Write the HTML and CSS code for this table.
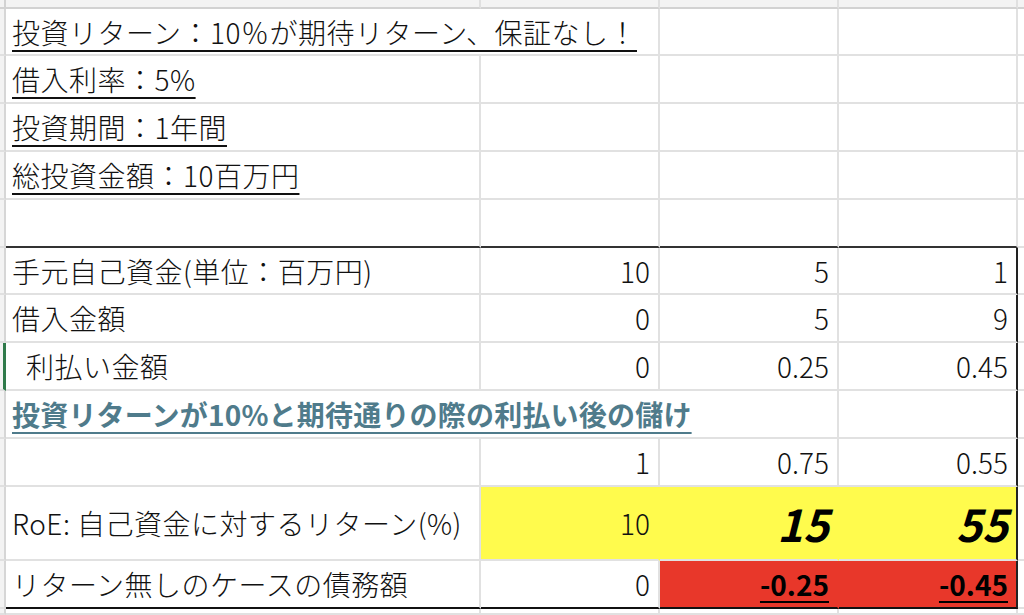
FILE: index.html
```html
<!DOCTYPE html>
<html lang="ja">
<head>
<meta charset="utf-8">
<title>投資リターン</title>
<link rel="stylesheet" href="styles.css">
</head>
<body>
<div class="sheet">
  <!-- column header strip -->
  <div class="ch corner"></div>
  <div class="ch"></div>
  <div class="ch"></div>
  <div class="ch"></div>
  <div class="ch"></div>
  <div class="ch rest"></div>

  <!-- row 1 -->
  <div class="rh"></div>
  <div class="c label span2"><span class="u">投資リターン：10％が期待リターン、保証なし！</span></div>
  <div class="c"></div>
  <div class="c"></div>
  <div class="c rest"></div>

  <!-- row 2 -->
  <div class="rh"></div>
  <div class="c label"><span class="u">借入利率：5%</span></div>
  <div class="c"></div>
  <div class="c"></div>
  <div class="c"></div>
  <div class="c rest"></div>

  <!-- row 3 -->
  <div class="rh"></div>
  <div class="c label"><span class="u">投資期間：1年間</span></div>
  <div class="c"></div>
  <div class="c"></div>
  <div class="c"></div>
  <div class="c rest"></div>

  <!-- row 4 -->
  <div class="rh"></div>
  <div class="c label"><span class="u">総投資金額：10百万円</span></div>
  <div class="c"></div>
  <div class="c"></div>
  <div class="c"></div>
  <div class="c rest"></div>

  <!-- row 5 -->
  <div class="rh"></div>
  <div class="c bb"></div>
  <div class="c bb"></div>
  <div class="c bb"></div>
  <div class="c bb"></div>
  <div class="c rest"></div>

  <!-- row 6 -->
  <div class="rh"></div>
  <div class="c label">手元自己資金(単位：百万円)</div>
  <div class="c num">10</div>
  <div class="c num">5</div>
  <div class="c num br">1</div>
  <div class="c rest"></div>

  <!-- row 7 -->
  <div class="rh"></div>
  <div class="c label">借入金額</div>
  <div class="c num">0</div>
  <div class="c num">5</div>
  <div class="c num br">9</div>
  <div class="c rest"></div>

  <!-- row 8 -->
  <div class="rh sel"></div>
  <div class="c label indent">利払い金額</div>
  <div class="c num">0</div>
  <div class="c num">0.25</div>
  <div class="c num br">0.45</div>
  <div class="c rest"></div>

  <!-- row 9 -->
  <div class="rh"></div>
  <div class="c span3"><span class="heading">投資リターンが10%と期待通りの際の利払い後の儲け</span></div>
  <div class="c br"></div>
  <div class="c rest"></div>

  <!-- row 10 -->
  <div class="rh"></div>
  <div class="c"></div>
  <div class="c num">1</div>
  <div class="c num">0.75</div>
  <div class="c num br">0.55</div>
  <div class="c rest"></div>

  <!-- row 11 -->
  <div class="rh"></div>
  <div class="c label">RoE: 自己資金に対するリターン(%)</div>
  <div class="c num yellow">10</div>
  <div class="c num yellow big">15</div>
  <div class="c num yellow big br">55</div>
  <div class="c rest"></div>

  <!-- row 12 -->
  <div class="rh"></div>
  <div class="c label bbk">リターン無しのケースの債務額</div>
  <div class="c num bbk">0</div>
  <div class="c num red bbk"><span class="neg">-0.25</span></div>
  <div class="c num red bbk br"><span class="neg">-0.45</span></div>
  <div class="c rest"></div>

  <!-- row 13 -->
  <div class="rh"></div>
  <div class="c"></div>
  <div class="c"></div>
  <div class="c"></div>
  <div class="c"></div>
  <div class="c rest"></div>
</div>
</body>
</html>
```

FILE: styles.css
```css
* {
  box-sizing: border-box;
}

html, body {
  margin: 0;
  padding: 0;
  background: #ffffff;
}

body {
  width: 1024px;
  height: 615px;
  overflow: hidden;
  font-family: "Noto Sans CJK JP", "Noto Sans", sans-serif;
  color: #111111;
}

.sheet {
  display: grid;
  grid-template-columns: 6px 475px 179px 179px 179px 1fr;
  grid-template-rows: 9px 47px 48px 48px 48px 48px 47px 48px 48px 48px 48px 74px 48px 1fr;
  width: 1024px;
  height: 615px;
}

.ch {
  background: #f3f3f3;
  border-bottom: 2px solid #d2d2d2;
  border-right: 2px solid #e0e0e0;
}

.ch.corner {
  border-right: 2px solid #d2d2d2;
}

.rh {
  background: #f3f3f3;
  border-right: 2px solid #d6d6d6;
  border-bottom: 2px solid #e0e0e0;
}

.rh.sel {
  border-right: 3px solid #2f7a4a;
}

.c {
  display: flex;
  align-items: center;
  padding: 0 8px 0 6px;
  border-right: 2px solid #e1e1e1;
  border-bottom: 2px solid #e1e1e1;
  font-size: 28px;
  font-weight: 300;
  line-height: 1;
  white-space: nowrap;
  overflow: visible;
  min-width: 0;
}

.label {
  letter-spacing: 0.5px;
}

.c.rest {
  border-right: none;
}

.span2 {
  grid-column: span 2;
}

.span3 {
  grid-column: span 3;
}

.u {
  text-decoration: underline;
  text-decoration-thickness: 2px;
  text-underline-offset: 6px;
}

.indent {
  padding-left: 20px;
}

.num {
  justify-content: flex-end;
}

.heading {
  font-weight: 700;
  color: #4f7b8b;
  letter-spacing: 0.2px;
  text-decoration: underline;
  text-decoration-thickness: 2px;
  text-underline-offset: 6px;
}

.bb {
  border-bottom: 2px solid #333333;
}

.bbk {
  border-bottom: 2px solid #111111;
}

.br {
  border-right: 2px solid #222222;
}

.yellow {
  background: #fffb4d;
  border-right-color: #fffb4d;
}

.yellow.br {
  border-right-color: #222222;
}

.big {
  font-size: 44px;
  font-weight: 700;
  font-style: italic;
  color: #000000;
}

.red {
  background: #e8372a;
  border-right-color: #e8372a;
}

.red.br {
  border-right-color: #222222;
}

.neg {
  font-weight: 700;
  color: #000000;
  text-decoration: underline;
  text-decoration-thickness: 2px;
  text-underline-offset: 5px;
}
```
